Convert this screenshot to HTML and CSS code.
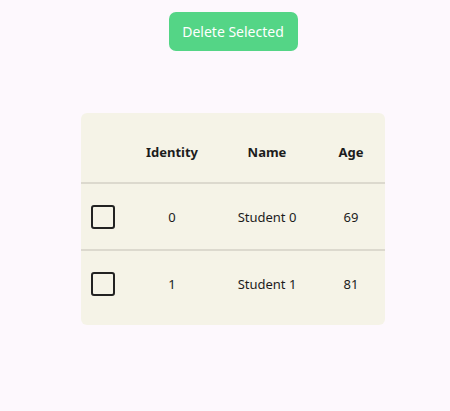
FILE: index.html
```html
<!DOCTYPE html>
<html>
<head>
<meta charset="utf-8">
<link rel="stylesheet" href="styles.css">
</head>
<body>
<main class="page">
  <button class="delete-btn">Delete Selected</button>
  <div class="table-card">
    <table class="students">
      <thead>
        <tr>
          <th class="col-check"></th>
          <th class="col-id">Identity</th>
          <th class="col-name">Name</th>
          <th class="col-age">Age</th>
        </tr>
      </thead>
      <tbody>
        <tr>
          <td class="col-check"><span class="checkbox"></span></td>
          <td>0</td>
          <td>Student 0</td>
          <td>69</td>
        </tr>
        <tr>
          <td class="col-check"><span class="checkbox"></span></td>
          <td>1</td>
          <td>Student 1</td>
          <td>81</td>
        </tr>
      </tbody>
    </table>
  </div>
</main>
</body>
</html>
```
FILE: styles.css
```css
html, body {
  margin: 0;
  padding: 0;
  background: #fdf8fd;
}
body {
  font-family: "Noto Sans", "Open Sans", sans-serif;
  color: #1c1c1c;
}
.page {
  padding: 12px 0 0 16px;
  display: flex;
  flex-direction: column;
  align-items: center;
}
.delete-btn {
  width: 129px;
  height: 39px;
  border: none;
  border-radius: 7px;
  background: #54d586;
  color: #ffffff;
  font-family: inherit;
  font-size: 14px;
  padding: 0;
}
.table-card {
  margin-top: 62px;
  width: 304px;
  background: #f5f3e7;
  border-radius: 6px;
  padding: 8px 0;
}
.students {
  width: 100%;
  table-layout: fixed;
  border-collapse: collapse;
  font-size: 13px;
  text-align: center;
}
.students th,
.students td {
  box-sizing: border-box;
}
.students th {
  height: 62px;
  padding: 0;
  font-weight: 700;
  border-bottom: 2px solid #dcd9ce;
}
.students td {
  height: 67px;
  padding: 0;
  border-bottom: 2px solid #dcd9ce;
}
.students tbody tr:last-child td {
  border-bottom: none;
  height: 67px;
}
.col-check { width: 46px; }
.col-id { width: 90px; }
.col-name { width: 100px; }
.col-age { width: 68px; }
td.col-check {
  text-align: left;
  padding-left: 10px;
}
.checkbox {
  display: block;
  width: 20px;
  height: 20px;
  border: 2px solid #222222;
  border-radius: 3px;
}
```
